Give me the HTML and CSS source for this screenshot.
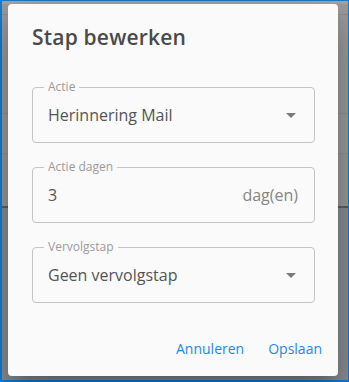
FILE: index.html
```html
<!DOCTYPE html>
<html lang="nl">
  <head>
    <meta charset="UTF-8" />
    <meta name="viewport" content="width=device-width, initial-scale=1.0" />
    <title>Stap bewerken</title>
    <link rel="stylesheet" href="styles.css">
  </head>
  <body>
    <div class="screen">
      <div class="dialog" role="dialog">
        <h2 class="dialog-title">Stap bewerken</h2>

        <div class="dialog-content">
          <div class="field">
            <label class="field-label">Actie</label>
            <span class="field-value">Herinnering Mail</span>
            <svg class="field-arrow" viewBox="0 0 24 24" width="24" height="24"><path d="M7 10l5 5 5-5z" /></svg>
          </div>

          <div class="field">
            <label class="field-label">Actie dagen</label>
            <span class="field-value">3</span>
            <span class="field-unit">dag(en)</span>
          </div>

          <div class="field">
            <label class="field-label">Vervolgstap</label>
            <span class="field-value">Geen vervolgstap</span>
            <svg class="field-arrow" viewBox="0 0 24 24" width="24" height="24"><path d="M7 10l5 5 5-5z" /></svg>
          </div>
        </div>

        <div class="dialog-actions">
          <button type="button" class="text-button">Annuleren</button>
          <button type="button" class="text-button">Opslaan</button>
        </div>
      </div>
    </div>
  </body>
</html>
```

FILE: styles.css
```css
* {
  margin: 0;
  padding: 0;
  box-sizing: border-box;
}

body {
  width: 349px;
  height: 382px;
  overflow: hidden;
  font-family: "Open Sans", "Noto Sans", sans-serif;
}

.screen {
  width: 349px;
  height: 382px;
  border-top: 1px solid #1a7cd0;
  border-left: 2px solid #1a7cd0;
  border-right: 1px solid #1a7cd0;
  border-bottom: 2px solid #1a7cd0;
  background: linear-gradient(
    to bottom,
    #a6a6a6 0 3px,
    #9d9d9d 3px 13px,
    #8f8f8f 13px 14px,
    #9c9c9c 14px 112px,
    #929292 112px 113px,
    #9c9c9c 113px 152px,
    #929292 152px 153px,
    #9a9a9a 153px 205px,
    #5e6062 205px 207px,
    #8a8d91 207px
  );
}

.dialog {
  width: 330px;
  height: 372px;
  margin: 3px 0 0 6px;
  background-color: #fafafa;
  border-radius: 4px;
  box-shadow: 0 11px 15px -7px rgba(0, 0, 0, 0.2),
    0 24px 38px 3px rgba(0, 0, 0, 0.14), 0 9px 46px 8px rgba(0, 0, 0, 0.12);
}

.dialog-title {
  padding: 17px 24px 0;
  font-size: 21px;
  line-height: 32px;
  font-weight: 600;
  letter-spacing: 0.2px;
  color: #4a4a4a;
}

.dialog-content {
  display: flex;
  flex-direction: column;
  gap: 24px;
  padding: 34px 23px 0 24px;
}

.field {
  position: relative;
  display: flex;
  align-items: center;
  height: 56px;
  padding: 0 11px 0 15px;
  border: 1px solid #c4c4c4;
  border-radius: 4px;
}

.field-label {
  position: absolute;
  top: -9px;
  left: 11px;
  padding: 0 4px;
  background-color: #fafafa;
  font-size: 12px;
  line-height: 16px;
  color: #9a9a9a;
}

.field-value {
  flex: 1;
  font-size: 16px;
  line-height: 24px;
  color: #545454;
}

.field-unit {
  margin-right: 5px;
  font-size: 16px;
  line-height: 24px;
  color: #858585;
}

.field-arrow {
  fill: #7a7a7a;
}

.dialog-actions {
  display: flex;
  justify-content: flex-end;
  gap: 8px;
  margin-top: 22px;
  padding: 8px;
}

.text-button {
  padding: 6px 8px;
  border: none;
  background: none;
  font-family: "Open Sans", "Noto Sans", sans-serif;
  font-size: 14px;
  line-height: 20px;
  color: #1e88e5;
  cursor: pointer;
}
```
